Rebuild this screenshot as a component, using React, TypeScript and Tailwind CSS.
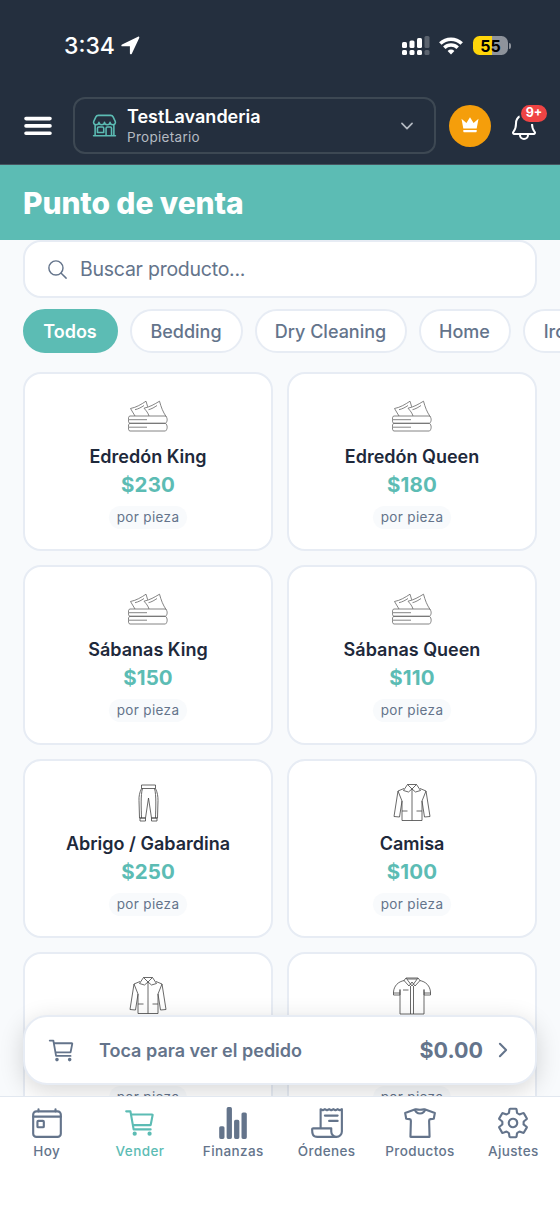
import type { ReactNode } from 'react';
import type { IconType } from 'react-icons';
import {
  IoCartOutline,
  IoChevronDownOutline,
  IoChevronForwardOutline,
  IoNotificationsOutline,
  IoReceiptOutline,
  IoSearchOutline,
  IoSettingsOutline,
  IoShirtOutline,
  IoStatsChart,
  IoStorefrontOutline,
  IoTodayOutline,
} from 'react-icons/io5';

type Garment = 'bedding' | 'pants' | 'jacket' | 'shirt';

interface Product {
  id: number;
  name?: string;
  price?: string;
  icon: Garment;
}

const PRODUCTS: Product[] = [
  { id: 1, name: 'Edredón King', price: '$230', icon: 'bedding' },
  { id: 2, name: 'Edredón Queen', price: '$180', icon: 'bedding' },
  { id: 3, name: 'Sábanas King', price: '$150', icon: 'bedding' },
  { id: 4, name: 'Sábanas Queen', price: '$110', icon: 'bedding' },
  { id: 5, name: 'Abrigo / Gabardina', price: '$250', icon: 'pants' },
  { id: 6, name: 'Camisa', price: '$100', icon: 'jacket' },
  { id: 7, icon: 'jacket' },
  { id: 8, icon: 'shirt' },
];

const CATEGORIES = [
  { label: 'Todos', width: 'w-[95px]' },
  { label: 'Bedding', width: 'w-[113px]' },
  { label: 'Dry Cleaning', width: 'w-[152px]' },
  { label: 'Home', width: 'w-[92px]' },
  { label: 'Ironing', width: 'w-[102px]' },
];

const TABS: { label: string; icon: IconType }[] = [
  { label: 'Hoy', icon: IoTodayOutline },
  { label: 'Vender', icon: IoCartOutline },
  { label: 'Finanzas', icon: IoStatsChart },
  { label: 'Órdenes', icon: IoReceiptOutline },
  { label: 'Productos', icon: IoShirtOutline },
  { label: 'Ajustes', icon: IoSettingsOutline },
];

// Thin line drawings, all on a 40x40 grid
const GARMENTS: Record<Garment, ReactNode> = {
  bedding: (
    <g transform="translate(-.5 0)">
      <path d="M2 20h36c2.200 1.800 2.200 5.600 0 7.300H2c-1.600-1.200-1.600-6.100 0-7.300Z" />
      <path d="M2 27.300h36c2.200 1.800 2.200 6 0 7.700H2c-1.600-1.200-1.600-6.500 0-7.700ZM1 23.700h18.500M1 31.200h18.500" />
      <path d="M7.500 20 3 12.500c6-1.200 10.500-4 15.500-7.300l1.700 5.600" />
      <path d="M21.500 20c-.9-3-2.500-5-5-7.800 5.800-1.200 10.500-4 15.500-7 1.700 6 3.200 10.500 6.800 15.600M7.500 13.700c3.500-.8 6.500-2.500 9-4.200M21 13.700c3.300-.8 6-2.500 8.500-4.200" />
    </g>
  ),
  pants: (
    <>
      <path d="M13.500 2h14v3.500h-14ZM13.500 5.500c-2 4-2.700 8-2.500 12L11.500 35h6l3-20 3 20h6l.5-17.500c0-4-.5-8-2.500-12" />
      <path d="M14.500 5.500C12.500 12 13.300 25 13.500 35M26.500 5.500c2 6.500 1.200 19.500 1 29.500M12 35h5.500v3H12ZM23.500 35H29v3h-5.500Z" />
    </>
  ),
  jacket: (
    <>
      <path d="M15.500 1.500h9l4 6-5 1.500-3.500-3-3.500 3-5-1.500 4-6ZM15.500 1.500 20 6l4.500-4.500M20 6v31.500" />
      <path d="M12 5.500 6 8 2 33.500l5.500.500L10 18v19.500h20V18l2.500 16 5.500-.5L34 8l-6-2.500M6 8l4 10M34 8l-4 10M10 28h5.500M24.500 28H30" />
    </>
  ),
  shirt: (
    <>
      <path d="M14 2h12l2 2.500-5 5.500-3-4-3 4-5-5.500L14 2ZM14 2l6 8 6-8M15 3h10" />
      <path d="M12.500 4.500C6 5.500 2 10 1.500 16v3H8v-5.500V38h24V13.500V19h6.500v-3c-.5-6-4.500-10.500-11-11.500M1.500 17H8M32 17h6.500M18.500 10v28M21.500 10v28M11 14h5.500" />
    </>
  ),
};

function StatusBar() {
  return (
    <div className="flex h-[86px] items-center justify-between pt-[5px] pr-[49px] pl-[64px]">
      <div className="flex items-center gap-[6px]">
        <span className="pt-[2px] text-[23px] leading-none font-medium">3:34</span>
        <svg width="19" height="19" viewBox="0 0 19 19" fill="currentColor" aria-hidden="true">
          <path d="M1 8.500 17 .7c.9-.4 1.600.3 1.200 1.200L10.800 17.700c-.5 1-1.900.8-1.900-.4v-7H1.500c-1.300 0-1.600-1.300-.5-1.800Z" />
        </svg>
      </div>
      <div className="flex items-center">
        <svg width="28" height="19" viewBox="0 0 28 19" fill="currentColor" aria-hidden="true">
          <rect x="0" y="6" width="5" height="6" rx="1.500" />
          <rect x="7.500" y="4.500" width="5" height="7.500" rx="1.500" />
          <rect x="15" y="2" width="5" height="10" rx="1.500" />
          <rect x="22.500" y="0" width="5" height="12" rx="1.500" opacity=".25" />
          <rect x="0" y="14" width="5" height="5" rx="1.500" />
          <rect x="7.500" y="14" width="5" height="5" rx="1.500" />
          <rect x="15" y="14" width="5" height="5" rx="1.500" />
          <rect x="22.500" y="14" width="5" height="5" rx="1.500" opacity=".25" />
        </svg>
        <svg className="ml-[9px]" width="24" height="18" viewBox="0 0 24 18" fill="none" stroke="currentColor" strokeWidth="3.500" aria-hidden="true">
          <path d="M1.300 6.500a15.300 15.300 0 0 1 21.400 0M5.300 10.700a9.600 9.600 0 0 1 13.400 0" />
          <path d="m12 17.500-3.400-3.600a4.900 4.900 0 0 1 6.800 0Z" fill="currentColor" stroke="none" />
        </svg>
        <div className="ml-[10px] flex h-[19px] w-[35px] items-center justify-center rounded-[6.500px] bg-linear-to-r from-[#ffd60a] from-55% to-[#8e939b] to-55% text-[16px] leading-none font-bold text-black">
          55
        </div>
        <span className="ml-px h-[6px] w-[2px] rounded-r-full bg-[#8e939b]" />
      </div>
    </div>
  );
}

function Header() {
  return (
    <header className="h-[165px] border-b border-[#475560] bg-[#242f3e] text-white">
      <StatusBar />
      <div className="flex h-[79px] items-center pr-[21px] pl-[24px]">
        <button type="button" aria-label="Menú">
          <svg width="28" height="20" viewBox="0 0 28 20" stroke="currentColor" strokeWidth="3.600" strokeLinecap="round" aria-hidden="true">
            <path d="M2 2.600h24M2 9.900h24M2 17.200h24" />
          </svg>
        </button>
        <button
          type="button"
          className="ml-[20.500px] flex h-[57px] w-[364px] items-center rounded-[12px] border-2 border-[#3d4853] pr-[18px] pl-[17px] text-left"
        >
          <IoStorefrontOutline className="size-[25px] text-[#5cbcb4]" />
          <span className="ml-[10.500px] flex flex-1 flex-col pt-px">
            <span className="text-[18px] leading-[22px] font-semibold">TestLavanderia</span>
            <span className="text-[13.500px] leading-[19px] tracking-[0.300px] text-[#b4bac2]">Propietario</span>
          </span>
          <IoChevronDownOutline className="size-[18px] text-[#b4bac2]" />
        </button>
        <div className="ml-[13.500px] flex size-[42px] shrink-0 items-center justify-center rounded-full bg-[#f59e0b]">
          <svg width="18" height="17" viewBox="0 0 18 17" fill="currentColor" aria-hidden="true">
            <path d="M2.300 11.500.5 1.700l4.900 4.400L9 .3l3.600 5.800 4.900-4.400-1.800 9.800ZM2.300 13h13.400v1.200c0 .6-.4 1-.9 1H3.200c-.5 0-.9-.4-.9-1Z" />
          </svg>
        </div>
        <button type="button" aria-label="Notificaciones" className="relative ml-[18px] flex size-[30px] shrink-0 items-center justify-center">
          <IoNotificationsOutline className="size-[32px] shrink-0" />
          <span className="absolute -top-[8px] left-[10px] flex h-[21px] w-[30px] items-center justify-center rounded-full border-2 border-[#242f3e] bg-[#ef4444] text-[12.500px] leading-none font-bold">
            9+
          </span>
        </button>
      </div>
    </header>
  );
}

function ProductCard({ product }: { product: Product }) {
  return (
    <div className="flex h-[179.500px] flex-col items-center rounded-[18px] border-2 border-[#e7ecf4] bg-white pt-[22px]">
      <svg
        width="40"
        height="40"
        viewBox="0 0 40 40"
        fill="none"
        stroke={product.icon === 'bedding' ? '#666' : '#444'}
        strokeWidth=".8"
        strokeLinejoin="round"
        aria-hidden="true"
      >
        {GARMENTS[product.icon]}
      </svg>
      <span className="mt-[9px] h-[24px] text-[18px] leading-[24px] font-semibold whitespace-nowrap text-[#1e293b]">{product.name}</span>
      <span className="mt-[2px] h-[28px] text-[20.500px] leading-[28px] font-bold tracking-[0.100px] text-[#5cbcb4]">{product.price}</span>
      <span className="mt-[7px] flex h-[23px] items-center rounded-full bg-[#f8fafc] px-[8px] text-[13.500px] tracking-[0.350px] text-[#64748b]">
        por pieza
      </span>
    </div>
  );
}

function OrderBar() {
  return (
    <button
      type="button"
      className="absolute bottom-[11px] left-[23px] flex h-[70px] w-[514px] items-center rounded-[24px] border-2 border-[#e7ecf4] bg-white pr-[21px] pl-[22px] text-[#64748b] shadow-[0_6px_24px_rgba(0,0,0,0.160)]"
    >
      <IoCartOutline className="size-[29px]" />
      <span className="ml-[23px] flex-1 pt-px text-left text-[18px] font-semibold">Toca para ver el pedido</span>
      <span className="pt-px text-[21.500px] font-bold">$0.00</span>
      <IoChevronForwardOutline className="ml-[9px] size-[22px]" />
    </button>
  );
}

function TabBar() {
  return (
    <nav className="grid h-[116px] grid-cols-6 border-t border-[#e2e8f0] bg-white">
      {TABS.map(({ label, icon: Icon }) => (
        <div
          key={label}
          className={`flex flex-col items-center pt-[9px] ${label === 'Vender' ? 'text-[#5cbcb4]' : 'text-[#64748b]'}`}
        >
          <Icon className="size-[34px]" />
          <span className="mt-[2px] text-[13.500px] leading-[18px] font-medium tracking-[0.400px]">{label}</span>
        </div>
      ))}
    </nav>
  );
}

export default function App() {
  return (
    <div className="h-[1212px] w-[560px] overflow-hidden bg-white font-['Inter',sans-serif]">
      <Header />
      <div className="flex h-[75px] items-center bg-[#5cbcb4] pt-px pl-[23px]">
        <h1 className="text-[30px] font-extrabold tracking-[-0.100px] text-white">Punto de venta</h1>
      </div>
      <main className="relative h-[856px] overflow-hidden bg-[#f8fafc] px-[23px]">
        <div className="flex h-[58px] items-center rounded-[18px] border-2 border-[#e7ecf4] bg-white pl-[21px] text-[#64748b]">
          <IoSearchOutline className="size-[23px]" />
          <span className="ml-[11px] pt-px text-[19.500px] tracking-[-0.250px]">Buscar producto...</span>
        </div>
        <div className="mt-[11px] -ml-[0.500px] flex gap-[12px]">
          {CATEGORIES.map(({ label, width }, i) => (
            <button
              key={label}
              type="button"
              className={`flex h-[44px] shrink-0 items-center justify-center rounded-full border-2 text-[18px] ${width} ${
                i === 0 ? 'border-[#5cbcb4] bg-[#5cbcb4] font-semibold text-white' : 'border-[#e7ecf4] bg-white font-medium text-[#64748b]'
              }`}
            >
              {label}
            </button>
          ))}
        </div>
        <div className="mt-[18.500px] grid grid-cols-2 gap-[14px]">
          {PRODUCTS.map((p) => (
            <ProductCard key={p.id} product={p} />
          ))}
        </div>
        <OrderBar />
      </main>
      <TabBar />
    </div>
  );
}
